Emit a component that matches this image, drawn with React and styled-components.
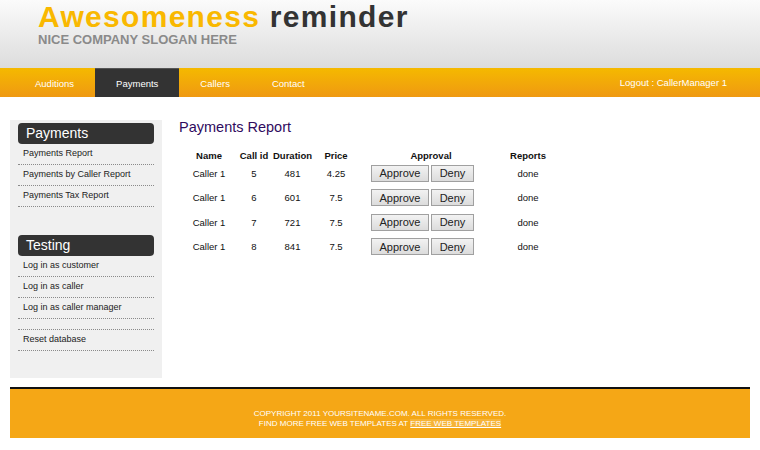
import React from 'react';
import styled, { createGlobalStyle } from 'styled-components';

const GlobalStyle = createGlobalStyle`
  html, body {
    margin: 0;
    padding: 0;
    background: #fff;
    font-family: "Liberation Sans", Arial, sans-serif;
  }
`;

const navItems = ['Auditions', 'Payments', 'Callers', 'Contact'];

const sections = [
  {
    title: 'Payments',
    links: ['Payments Report', 'Payments by Caller Report', 'Payments Tax Report'],
  },
  {
    title: 'Testing',
    links: ['Log in as customer', 'Log in as caller', 'Log in as caller manager', '', 'Reset database'],
  },
];

const rows = [
  { name: 'Caller 1', id: 5, duration: 481, price: '4.25' },
  { name: 'Caller 1', id: 6, duration: 601, price: '7.5' },
  { name: 'Caller 1', id: 7, duration: 721, price: '7.5' },
  { name: 'Caller 1', id: 8, duration: 841, price: '7.5' },
];

const App = () => {
  return (
    <Page>
      <GlobalStyle />
      <Header>
        <Logo>
          <span>Awesomeness</span> reminder
        </Logo>
        <Slogan>NICE COMPANY SLOGAN HERE</Slogan>
      </Header>
      <Nav>
        <NavList>
          {navItems.map((item) => (
            <NavItem key={item} $active={item === 'Payments'}>{item}</NavItem>
          ))}
        </NavList>
        <Logout>Logout : CallerManager 1</Logout>
      </Nav>
      <Content>
        <Sidebar>
          {sections.map((s) => (
            <Section key={s.title}>
              <SideTitle>{s.title}</SideTitle>
              <SideList>
                {s.links.map((l, i) => (
                  <SideLink key={i} $empty={!l}>{l}</SideLink>
                ))}
              </SideList>
            </Section>
          ))}
        </Sidebar>
        <Main>
          <Title>Payments Report</Title>
          <Table>
            <colgroup>
              <col style={{ width: 52 }} />
              <col style={{ width: 38 }} />
              <col style={{ width: 39 }} />
              <col style={{ width: 48 }} />
              <col style={{ width: 142 }} />
              <col style={{ width: 52 }} />
            </colgroup>
            <thead>
              <tr>
                <Th>Name</Th>
                <Th>Call id</Th>
                <Th>Duration</Th>
                <Th>Price</Th>
                <Th>Approval</Th>
                <Th>Reports</Th>
              </tr>
            </thead>
            <tbody>
              {rows.map((r) => (
                <tr key={r.id}>
                  <Td>{r.name}</Td>
                  <Td>{r.id}</Td>
                  <Td>{r.duration}</Td>
                  <Td>{r.price}</Td>
                  <Td $left>
                    <Buttons>
                      <Button $w={58}>Approve</Button>
                      <Button $w={43}>Deny</Button>
                    </Buttons>
                  </Td>
                  <Td>done</Td>
                </tr>
              ))}
            </tbody>
          </Table>
        </Main>
      </Content>
      <Footer>
        <div>COPYRIGHT 2011 YOURSITENAME.COM. ALL RIGHTS RESERVED.</div>
        <div>
          FIND MORE FREE WEB TEMPLATES AT <FooterLink href="#">FREE WEB TEMPLATES</FooterLink>
        </div>
      </Footer>
    </Page>
  );
};

export default App;

const Page = styled.div`
  width: 760px;
  height: 450px;
  overflow: hidden;
  background: #fff;
`;

const Header = styled.header`
  height: 68px;
  box-sizing: border-box;
  padding: 1px 0 0 38px;
  background: linear-gradient(#fbfbfb, #dcdcdc);
`;

const Logo = styled.div`
  font-size: 30px;
  font-weight: bold;
  letter-spacing: 1.3px;
  line-height: 32px;
  color: #333;
  span {
    color: #f9b800;
  }
`;

const Slogan = styled.div`
  font-size: 13px;
  font-weight: bold;
  color: #8a8a8a;
  line-height: 13px;
  margin-top: 0px;
`;

const Nav = styled.nav`
  height: 29px;
  display: flex;
  align-items: stretch;
  justify-content: space-between;
  background: linear-gradient(#f5b900, #ef9912);
  padding: 0 33px 0 14px;
`;

const NavList = styled.div`
  display: flex;
`;

const NavItem = styled.div`
  display: flex;
  align-items: center;
  padding: 0 21px;
  font-size: 9.5px;
  color: #fff;
  background: ${(p) => (p.$active ? '#333' : 'transparent')};
  border-top: 1px solid ${(p) => (p.$active ? '#555' : 'transparent')};
`;

const Logout = styled.div`
  display: flex;
  align-items: center;
  font-size: 9.5px;
  color: #fff;
`;

const Content = styled.div`
  display: flex;
  align-items: flex-start;
  padding: 23px 10px 0;
`;

const Sidebar = styled.aside`
  width: 152px;
  height: 258px;
  box-sizing: border-box;
  padding: 3px 8px 0;
  background: #f0f0f0;
`;

const Section = styled.div`
  & + & {
    margin-top: 28px;
  }
`;

const SideTitle = styled.div`
  height: 21px;
  box-sizing: border-box;
  padding-left: 8px;
  border-radius: 4px;
  background: #333;
  color: #fff;
  font-size: 14px;
  line-height: 21px;
`;

const SideList = styled.div`
  display: flex;
  flex-direction: column;
`;

const SideLink = styled.div`
  height: ${(p) => (p.$empty ? '11px' : '21px')};
  box-sizing: border-box;
  padding: 4px 0 0 5px;
  border-bottom: 1px dotted #8a8a8a;
  font-size: 9px;
  color: #222;
`;

const Main = styled.main`
  margin-left: 17px;
`;

const Title = styled.h2`
  margin: 0;
  font-size: 14.5px;
  font-weight: normal;
  line-height: 14px;
  color: #2f0b5e;
`;

const Table = styled.table`
  margin: 15px 0 0 4px;
  border-collapse: collapse;
  table-layout: fixed;
  width: 371px;
`;

const Th = styled.th`
  padding: 0;
  height: 12px;
  font-size: 9.5px;
  font-weight: bold;
  color: #111;
  text-align: center;
  white-space: nowrap;
`;

const Td = styled.td`
  padding: 0 0 0 ${(p) => (p.$left ? '11px' : '0')};
  height: 24.5px;
  font-size: 9.5px;
  color: #111;
  text-align: ${(p) => (p.$left ? 'left' : 'center')};
  white-space: nowrap;
`;

const Buttons = styled.div`
  display: flex;
  gap: 2px;
`;

const Button = styled.button`
  width: ${(p) => p.$w}px;
  height: 17px;
  padding: 0;
  font-family: "Liberation Sans", Arial, sans-serif;
  font-size: 11px;
  color: #222;
  background: linear-gradient(#f2f2f2, #dcdcdc);
  border: 1px solid #a0a0a0;
  border-radius: 0;
`;

const Footer = styled.footer`
  margin: 9px 10px 0;
  height: 51px;
  box-sizing: border-box;
  border-top: 2px solid #111;
  background: #f5a716;
  padding-top: 20px;
  text-align: center;
  font-size: 8px;
  line-height: 9.5px;
  color: #fff;
`;

const FooterLink = styled.a`
  color: #fff;
  text-decoration: underline;
  background: rgba(255, 255, 255, 0.15);
`;
